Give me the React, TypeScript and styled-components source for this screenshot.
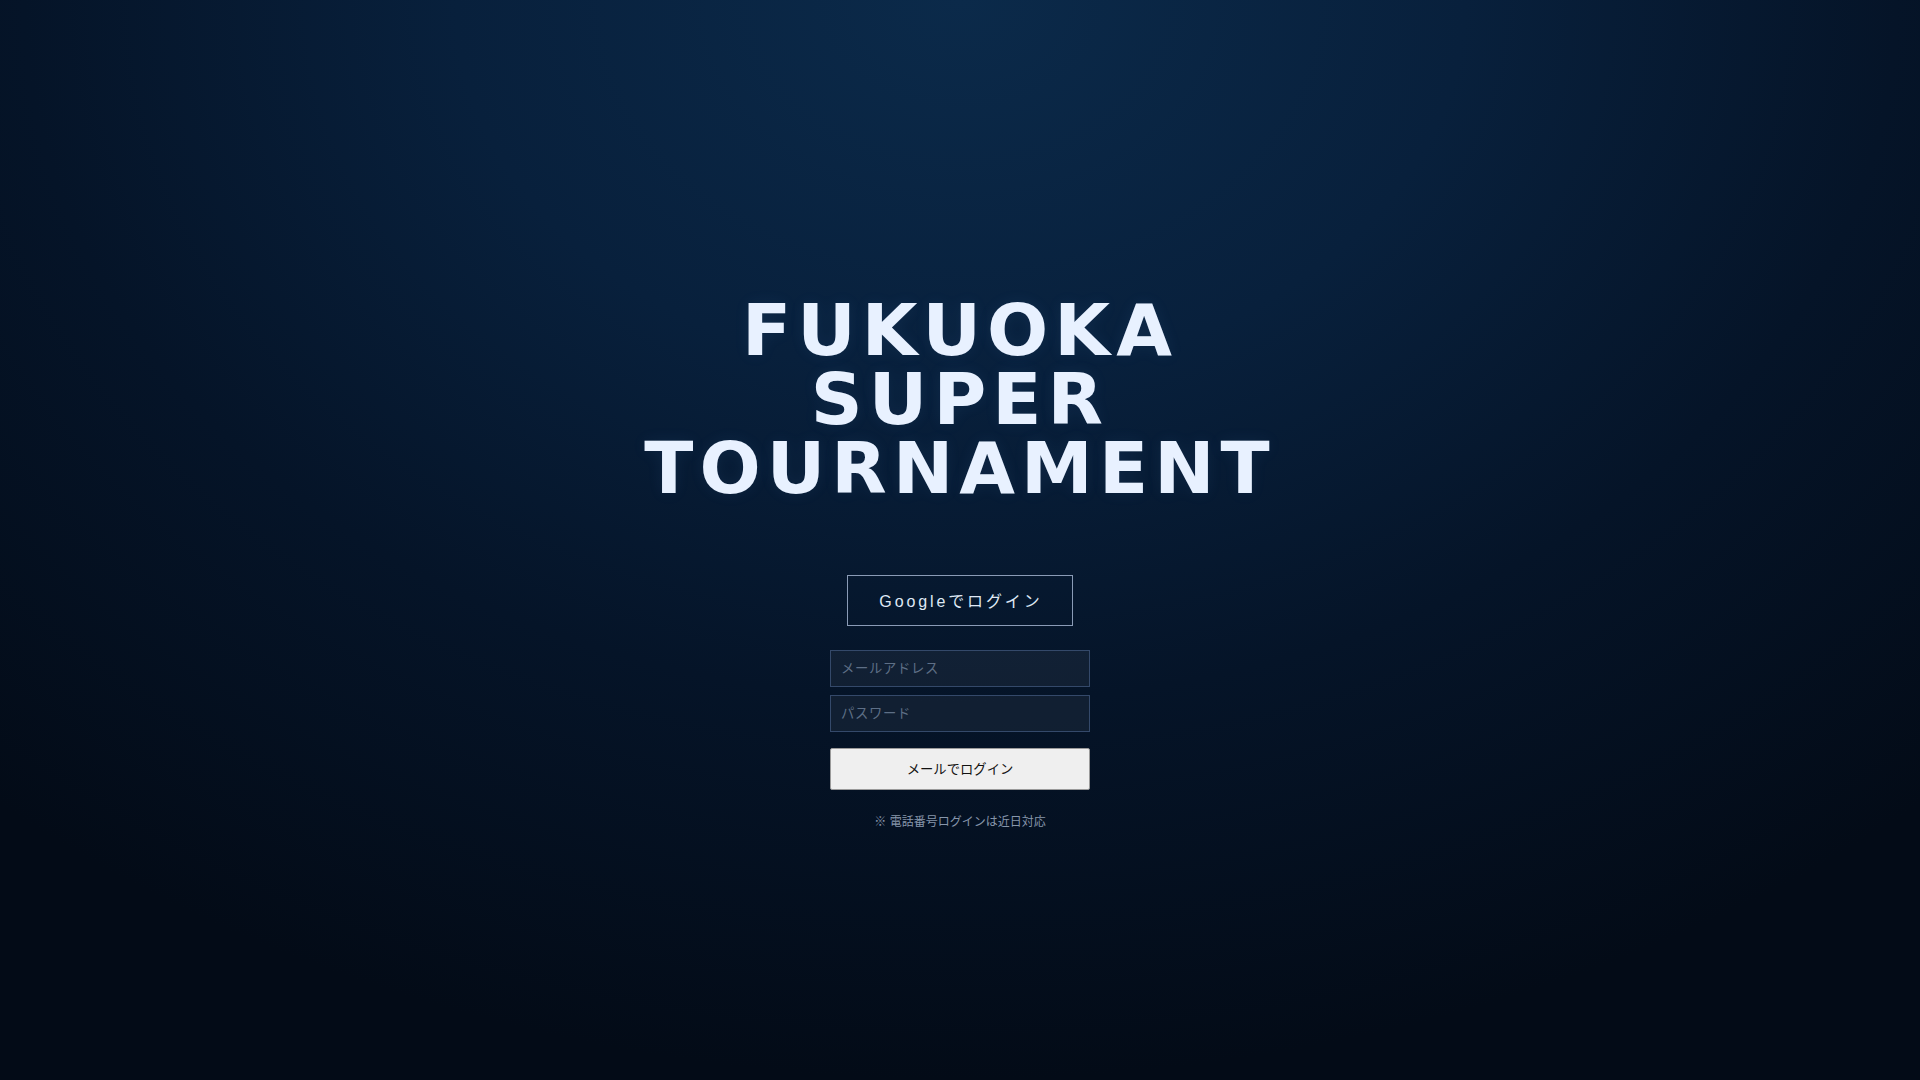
import React from "react";
import styled, { createGlobalStyle } from "styled-components";

const GlobalStyle = createGlobalStyle`
  html, body {
    margin: 0;
    padding: 0;
    height: 100%;
  }
  body {
    background: #030b17;
    font-family: "Liberation Sans", "Noto Sans CJK JP", sans-serif;
  }
  * { box-sizing: border-box; }
`;

const Page = styled.main`
  min-height: 100vh;
  display: flex;
  flex-direction: column;
  align-items: center;
  justify-content: center;
  padding-top: 46px;
  background: radial-gradient(ellipse 75% 100% at 50% 0%, #0b2a4a 0%, #08203c 35%, #051428 65%, #030b17 100%);
`;

const Title = styled.h1`
  margin: 0 0 72px;
  font-family: "DejaVu Sans", sans-serif;
  font-weight: 700;
  font-size: 72px;
  line-height: 69px;
  letter-spacing: 0.085em;
  color: #e8f1ff;
  text-align: center;
  text-shadow: 0 0 16px rgba(120, 170, 255, 0.08);
`;

const GoogleButton = styled.button`
  height: 51px;
  padding: 0 29px 0 31px;
  background: transparent;
  border: 1px solid #8a9bb6;
  color: #dfe8f5;
  font-family: "Liberation Sans", "Noto Sans CJK JP", sans-serif;
  font-size: 16px;
  letter-spacing: 0.18em;
  cursor: pointer;
  margin-bottom: 24px;
`;

const Form = styled.form`
  width: 260px;
  display: flex;
  flex-direction: column;
  gap: 8px;
`;

const Input = styled.input`
  width: 100%;
  height: 37px;
  padding: 0 10px;
  background: rgba(255, 255, 255, 0.05);
  border: 1px solid #34496a;
  border-radius: 0;
  color: #dfe8f5;
  font-family: "Liberation Sans", "Noto Sans CJK JP", sans-serif;
  font-size: 13.333px;
  letter-spacing: 0.05em;
  outline: none;
  &::placeholder {
    color: #5e6f86;
  }
`;

const SubmitButton = styled.button`
  margin-top: 8px;
  width: 100%;
  height: 42px;
  background: #efefef;
  border: 1px solid #9a9a9a;
  border-radius: 2px;
  color: #111;
  font-family: "Liberation Sans", "Noto Sans CJK JP", sans-serif;
  font-size: 13.333px;
  cursor: pointer;
`;

const Note = styled.p`
  margin: 24px 0 0;
  font-size: 12px;
  line-height: 17px;
  color: #8796ab;
  font-family: "Liberation Sans", "Noto Sans CJK JP", sans-serif;
`;

export default function App() {
  return (
    <>
      <GlobalStyle />
      <Page>
        <Title>
          FUKUOKA
          <br />
          SUPER
          <br />
          TOURNAMENT
        </Title>
        <GoogleButton type="button">Googleでログイン</GoogleButton>
        <Form onSubmit={(e) => e.preventDefault()}>
          <Input type="email" placeholder="メールアドレス" />
          <Input type="password" placeholder="パスワード" />
          <SubmitButton type="submit">メールでログイン</SubmitButton>
        </Form>
        <Note>※ 電話番号ログインは近日対応</Note>
      </Page>
    </>
  );
}
